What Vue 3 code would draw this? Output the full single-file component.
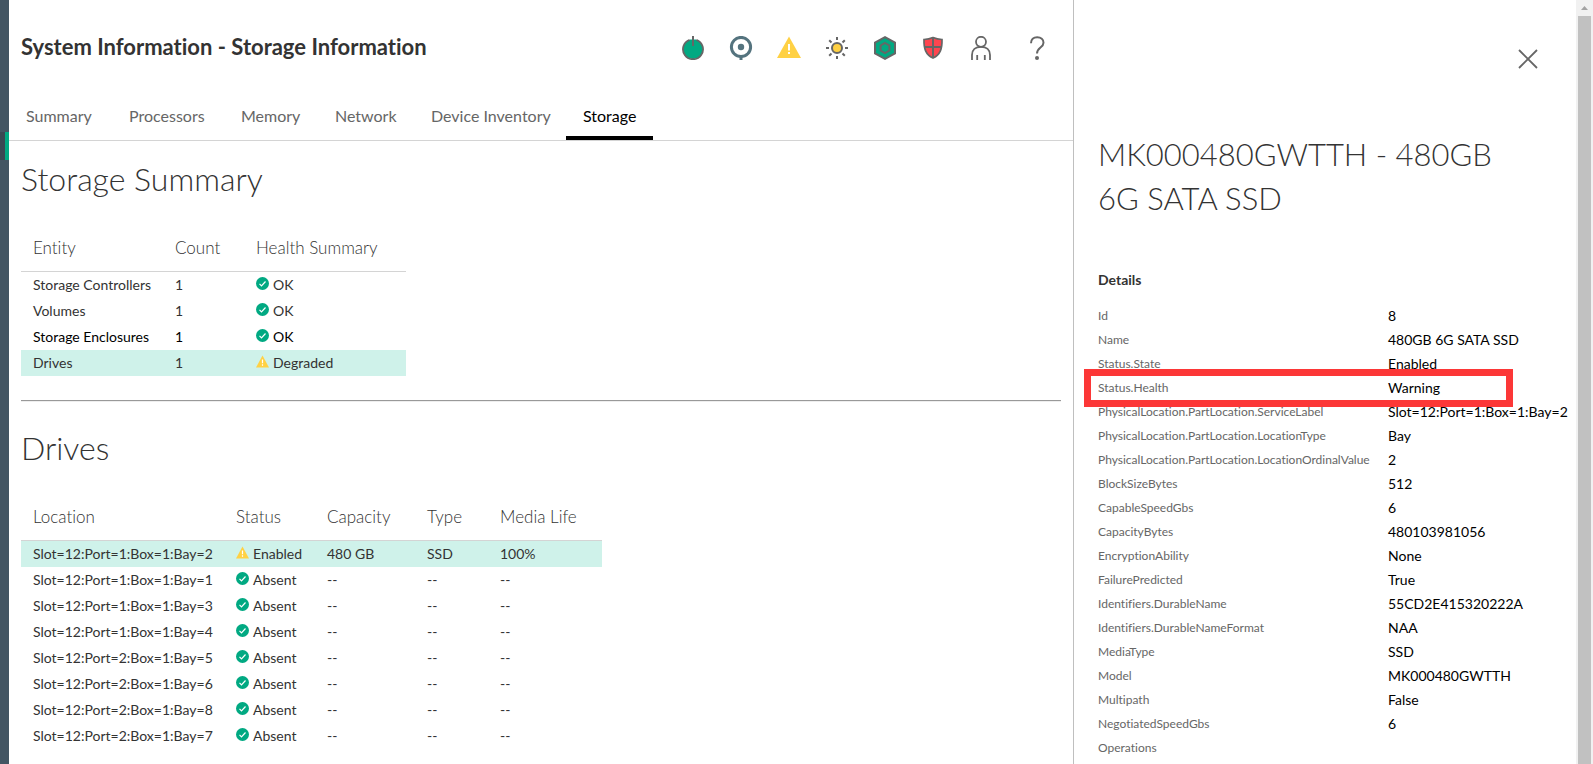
<script setup>
const tabs = ['Summary', 'Processors', 'Memory', 'Network', 'Device Inventory', 'Storage']

const summary = [
  { entity: 'Storage Controllers', count: 1, health: 'OK', ok: true },
  { entity: 'Volumes', count: 1, health: 'OK', ok: true },
  { entity: 'Storage Enclosures', count: 1, health: 'OK', ok: true, hover: true },
  { entity: 'Drives', count: 1, health: 'Degraded', ok: false, selected: true },
]

const absent = (location) => ({
  location, ok: true, status: 'Absent', capacity: '--', type: '--', life: '--',
})
const drives = [
  { location: 'Slot=12:Port=1:Box=1:Bay=2', ok: false, status: 'Enabled', capacity: '480 GB', type: 'SSD', life: '100%', selected: true },
  absent('Slot=12:Port=1:Box=1:Bay=1'),
  absent('Slot=12:Port=1:Box=1:Bay=3'),
  absent('Slot=12:Port=1:Box=1:Bay=4'),
  absent('Slot=12:Port=2:Box=1:Bay=5'),
  absent('Slot=12:Port=2:Box=1:Bay=6'),
  absent('Slot=12:Port=2:Box=1:Bay=8'),
  absent('Slot=12:Port=2:Box=1:Bay=7'),
]

const details = [
  ['Id', '8'],
  ['Name', '480GB 6G SATA SSD'],
  ['Status.State', 'Enabled'],
  ['Status.Health', 'Warning'],
  ['PhysicalLocation.PartLocation.ServiceLabel', 'Slot=12:Port=1:Box=1:Bay=2'],
  ['PhysicalLocation.PartLocation.LocationType', 'Bay'],
  ['PhysicalLocation.PartLocation.LocationOrdinalValue', '2'],
  ['BlockSizeBytes', '512'],
  ['CapableSpeedGbs', '6'],
  ['CapacityBytes', '480103981056'],
  ['EncryptionAbility', 'None'],
  ['FailurePredicted', 'True'],
  ['Identifiers.DurableName', '55CD2E415320222A'],
  ['Identifiers.DurableNameFormat', 'NAA'],
  ['MediaType', 'SSD'],
  ['Model', 'MK000480GWTTH'],
  ['Multipath', 'False'],
  ['NegotiatedSpeedGbs', '6'],
  ['Operations', ''],
]
</script>

<template>
  <div class="app">
    <nav class="rail" aria-label="Main navigation"><div class="rail-current"></div></nav>

    <main class="main">
      <header class="top">
        <h1>System Information - Storage Information</h1>
        <div class="tools">
          <button type="button" aria-label="Power">
            <svg viewBox="0 0 24 24"><circle cx="12" cy="13.2" r="10" fill="#01a982" /><path d="M9 0h6v5H9z" fill="#fff" /><path d="M9 3.5h6v3H9z" fill="#01a982" /><path d="M8.6 3.8a10 10 0 1 0 6.8 0" fill="none" stroke="#666" stroke-width="1.8" /><path d="M12 0v10" stroke="#666" stroke-width="2" /></svg>
          </button>
          <button type="button" aria-label="Locator">
            <svg viewBox="0 0 24 24"><circle cx="12" cy="11" r="9.6" fill="none" stroke="#54737e" stroke-width="3" /><circle cx="12" cy="11" r="3.2" fill="#54737e" /><path d="M12 21v3" stroke="#54737e" stroke-width="3" /></svg>
          </button>
          <button type="button" aria-label="Health warning">
            <svg viewBox="0 0 24 24"><path d="M12 .5 24 22H0z" fill="#ffd144" /><path d="M12 8v6.500M12 16v2" stroke="#fff" stroke-width="2" /></svg>
          </button>
          <button type="button" aria-label="Brightness">
            <svg viewBox="0 0 24 24" stroke="#666" stroke-width="2"><circle cx="12" cy="12" r="5" fill="#ffd144" /><path d="M12 1v3M12 20v3M1 12h3M20 12h3M4.200 4.200l2.300 2.300M17.500 17.500l2.300 2.300M4.200 19.800l2.300-2.300M17.500 6.500l2.300-2.300" fill="none" /></svg>
          </button>
          <button type="button" aria-label="Runtime">
            <svg viewBox="0 0 24 24" stroke="#666"><path d="M12 1.200 22 6.700v10.600L12 22.800 2 17.300V6.700z" fill="#01a982" stroke-width="2" /><path d="M12 7l4.400 2.500v5L12 17l-4.400-2.500v-5z" fill="#01a982" stroke-width="2" /></svg>
          </button>
          <button type="button" aria-label="Security">
            <svg viewBox="0 0 24 24" stroke="#666"><path d="M12 1.600c2.800 1.300 6 1.900 9 1.900C21.200 12.500 19.500 18.500 12 22 4.500 18.500 2.800 12.500 3 3.500c3 0 6.200-.600 9-1.900z" fill="#ff454f" stroke-width="1.700" /><path d="M12 2v20M3 11h18" stroke-width="2" /></svg>
          </button>
          <button type="button" aria-label="User">
            <svg viewBox="0 0 24 24" fill="none" stroke="#666" stroke-width="1.800"><circle cx="12" cy="5.800" r="5" /><path d="M3 24v-5c0-5 3.500-8.200 9-8.200s9 3.200 9 8.200v5M8.200 19v5M15.800 19v5" /></svg>
          </button>
          <button type="button" class="help" aria-label="Help">
            <svg viewBox="0 0 24 24" fill="none" stroke="#666" stroke-width="2"><path d="M6 7.200C6 3.500 8.500 1.200 12.200 1.200c3.800 0 6.300 2.300 6.300 5.500 0 5-6.500 4.800-6.500 10.800" /><circle cx="12" cy="22" r="2" fill="#666" stroke="none" /></svg>
          </button>
        </div>
      </header>

      <nav class="tabs" aria-label="System information">
        <a v-for="t in tabs" :key="t" href="#" :class="{ active: t === 'Storage' }">{{ t }}</a>
      </nav>

      <section class="block">
        <h2>Storage Summary</h2>
        <table class="summary">
          <thead>
            <tr><th>Entity</th><th>Count</th><th>Health Summary</th></tr>
          </thead>
          <tbody>
            <tr v-for="r in summary" :key="r.entity" :class="{ selected: r.selected, hover: r.hover }">
              <td>{{ r.entity }}</td>
              <td>{{ r.count }}</td>
              <td>
                <span class="state">
                  <svg v-if="r.ok" viewBox="0 0 13 13"><circle cx="6.500" cy="6.500" r="6.500" fill="#01a982" /><path d="M3.500 6.800l2 2 4-4.300" fill="none" stroke="#fff" stroke-width="1.200" /></svg>
                  <svg v-else viewBox="0 0 13 13"><path d="M6.500 .5 13 12.500H0z" fill="#ffd144" /><path d="M6.500 4.500v3.700M6.500 9.300v1.400" stroke="#fff" stroke-width="1.200" /></svg>
                  {{ r.health }}
                </span>
              </td>
            </tr>
          </tbody>
        </table>
      </section>

      <hr />

      <section class="block">
        <h2>Drives</h2>
        <table class="drives">
          <thead>
            <tr><th>Location</th><th>Status</th><th>Capacity</th><th>Type</th><th>Media Life</th></tr>
          </thead>
          <tbody>
            <tr v-for="d in drives" :key="d.location" :class="{ selected: d.selected }">
              <td>{{ d.location }}</td>
              <td>
                <span class="state">
                  <svg v-if="d.ok" viewBox="0 0 13 13"><circle cx="6.500" cy="6.500" r="6.500" fill="#01a982" /><path d="M3.500 6.800l2 2 4-4.300" fill="none" stroke="#fff" stroke-width="1.200" /></svg>
                  <svg v-else viewBox="0 0 13 13"><path d="M6.500 .5 13 12.500H0z" fill="#ffd144" /><path d="M6.500 4.500v3.700M6.500 9.300v1.400" stroke="#fff" stroke-width="1.200" /></svg>
                  {{ d.status }}
                </span>
              </td>
              <td>{{ d.capacity }}</td>
              <td>{{ d.type }}</td>
              <td>{{ d.life }}</td>
            </tr>
          </tbody>
        </table>
      </section>
    </main>

    <aside class="panel">
      <div class="panel-body">
        <div class="panel-top">
          <button type="button" aria-label="Close">
            <svg viewBox="0 0 20 20"><path d="M1 1l18 18M19 1L1 19" stroke="#666" stroke-width="1.800" /></svg>
          </button>
        </div>
        <h2>MK000480GWTTH - 480GB 6G SATA SSD</h2>
        <h3>Details</h3>
        <dl>
          <div v-for="[k, v] in details" :key="k" :class="{ marked: k === 'Status.Health' }">
            <dt>{{ k }}</dt>
            <dd>{{ v }}</dd>
          </div>
        </dl>
      </div>
      <div class="scroll" aria-hidden="true">
        <svg viewBox="0 0 17 16"><path d="M5 10l3.500-4L12 10z" fill="#a3a3a3" /></svg>
        <div class="thumb"></div>
      </div>
    </aside>
  </div>
</template>

<style>
body {
  margin: 0;
  overflow: hidden;
}
</style>

<style scoped>
.app {
  display: flex;
  height: 100vh;
  overflow: hidden;
  background: #fff;
  color: #333;
  font-family: Lato, "Open Sans", sans-serif;
  font-size: 14px;
  font-variant-ligatures: none;
}
h1, h2, h3, dl, dd {
  margin: 0;
}
button {
  padding: 0;
  border: 0;
  background: none;
}
svg {
  display: block;
}
.rail {
  flex: 0 0 9px;
  padding-top: 132px;
  background: #435563;
}
.rail-current {
  height: 28px;
  box-sizing: border-box;
  border-right: 4px solid #01a982;
  background: #3a4853;
}
.main {
  flex: 1;
  min-width: 0;
}
.top {
  display: flex;
  align-items: center;
  justify-content: space-between;
  height: 96px;
  padding: 0 24px 0 12px;
}
h1 {
  padding-bottom: 2px;
  font-size: 22px;
  line-height: 28px;
  font-weight: 700;
}
.tools {
  display: flex;
  gap: 24px;
}
.tools svg {
  width: 24px;
  height: 24px;
}
.help {
  margin-left: 8px;
}
.tabs {
  display: grid;
  grid-template-columns: 103px 112px 94px 96px 152px 87px;
  border-bottom: 1px solid #d4d4d4;
}
.tabs a {
  height: 40px;
  padding-left: 17px;
  border-bottom: 4px solid transparent;
  color: #666;
  font-size: 16px;
  line-height: 40px;
  text-decoration: none;
  white-space: nowrap;
}
.tabs .active {
  border-color: #000;
  color: #000;
}
.block {
  padding: 0 12px;
}
h2 {
  font-weight: 300;
}
.block h2 {
  padding-top: 18px;
  font-size: 32px;
  line-height: 40px;
}
table {
  margin-top: 26px;
  border-collapse: collapse;
  table-layout: fixed;
}
th, td {
  padding: 0 0 0 12px;
  text-align: left;
  white-space: nowrap;
}
th {
  height: 44px;
  padding-bottom: 2px;
  border-bottom: 1px solid #d4d4d4;
  font-size: 17px;
  font-weight: 300;
}
td {
  height: 26px;
  line-height: 26px;
}
.summary {
  width: 385px;
}
.summary th:nth-child(1) { width: 130px; }
.summary th:nth-child(2) { width: 69px; }
.drives {
  width: 581px;
}
.drives th:nth-child(1) { width: 191px; }
.drives th:nth-child(2) { width: 79px; }
.drives th:nth-child(3) { width: 88px; }
.drives th:nth-child(4) { width: 61px; }
.selected {
  background: #cff2ea;
}
.hover {
  color: #000;
}
.state {
  display: flex;
  gap: 4px;
}
.state svg {
  width: 13px;
  height: 13px;
  margin-top: 5px;
}
hr {
  height: 0;
  margin: 24px 12px 8px;
  border: 0;
  border-top: 1px solid #999;
  border-bottom: 1px solid #eee;
}
.panel {
  display: flex;
  flex: 0 0 519px;
  border-left: 1px solid #bfbfbf;
}
.panel-body {
  flex: 1;
  min-width: 0;
  padding-left: 24px;
}
.panel-top {
  display: flex;
  justify-content: flex-end;
  padding: 49px 38px 0 0;
}
.panel-top svg {
  width: 20px;
  height: 20px;
}
.panel h2 {
  padding: 63px 70px 0 0;
  font-size: 31px;
  line-height: 44px;
}
h3 {
  padding: 50px 0 14px;
  font-size: 14px;
  line-height: 20px;
  font-weight: 700;
}
dl > div {
  display: flex;
  height: 24px;
  line-height: 24px;
  white-space: nowrap;
}
dt {
  flex: 0 0 290px;
  color: #666;
  font-size: 12px;
}
dd {
  color: #000;
}
.marked {
  position: relative;
}
.marked::after {
  content: "";
  position: absolute;
  inset: -7px 63px -7px -14px;
  border: 7px solid #fc3737;
}
.scroll {
  flex: 0 0 17px;
  background: #f1f1f1;
}
.scroll svg {
  width: 17px;
  height: 16px;
}
.thumb {
  height: 100%;
  margin: 0 2px;
  background: #c1c1c1;
}
</style>
